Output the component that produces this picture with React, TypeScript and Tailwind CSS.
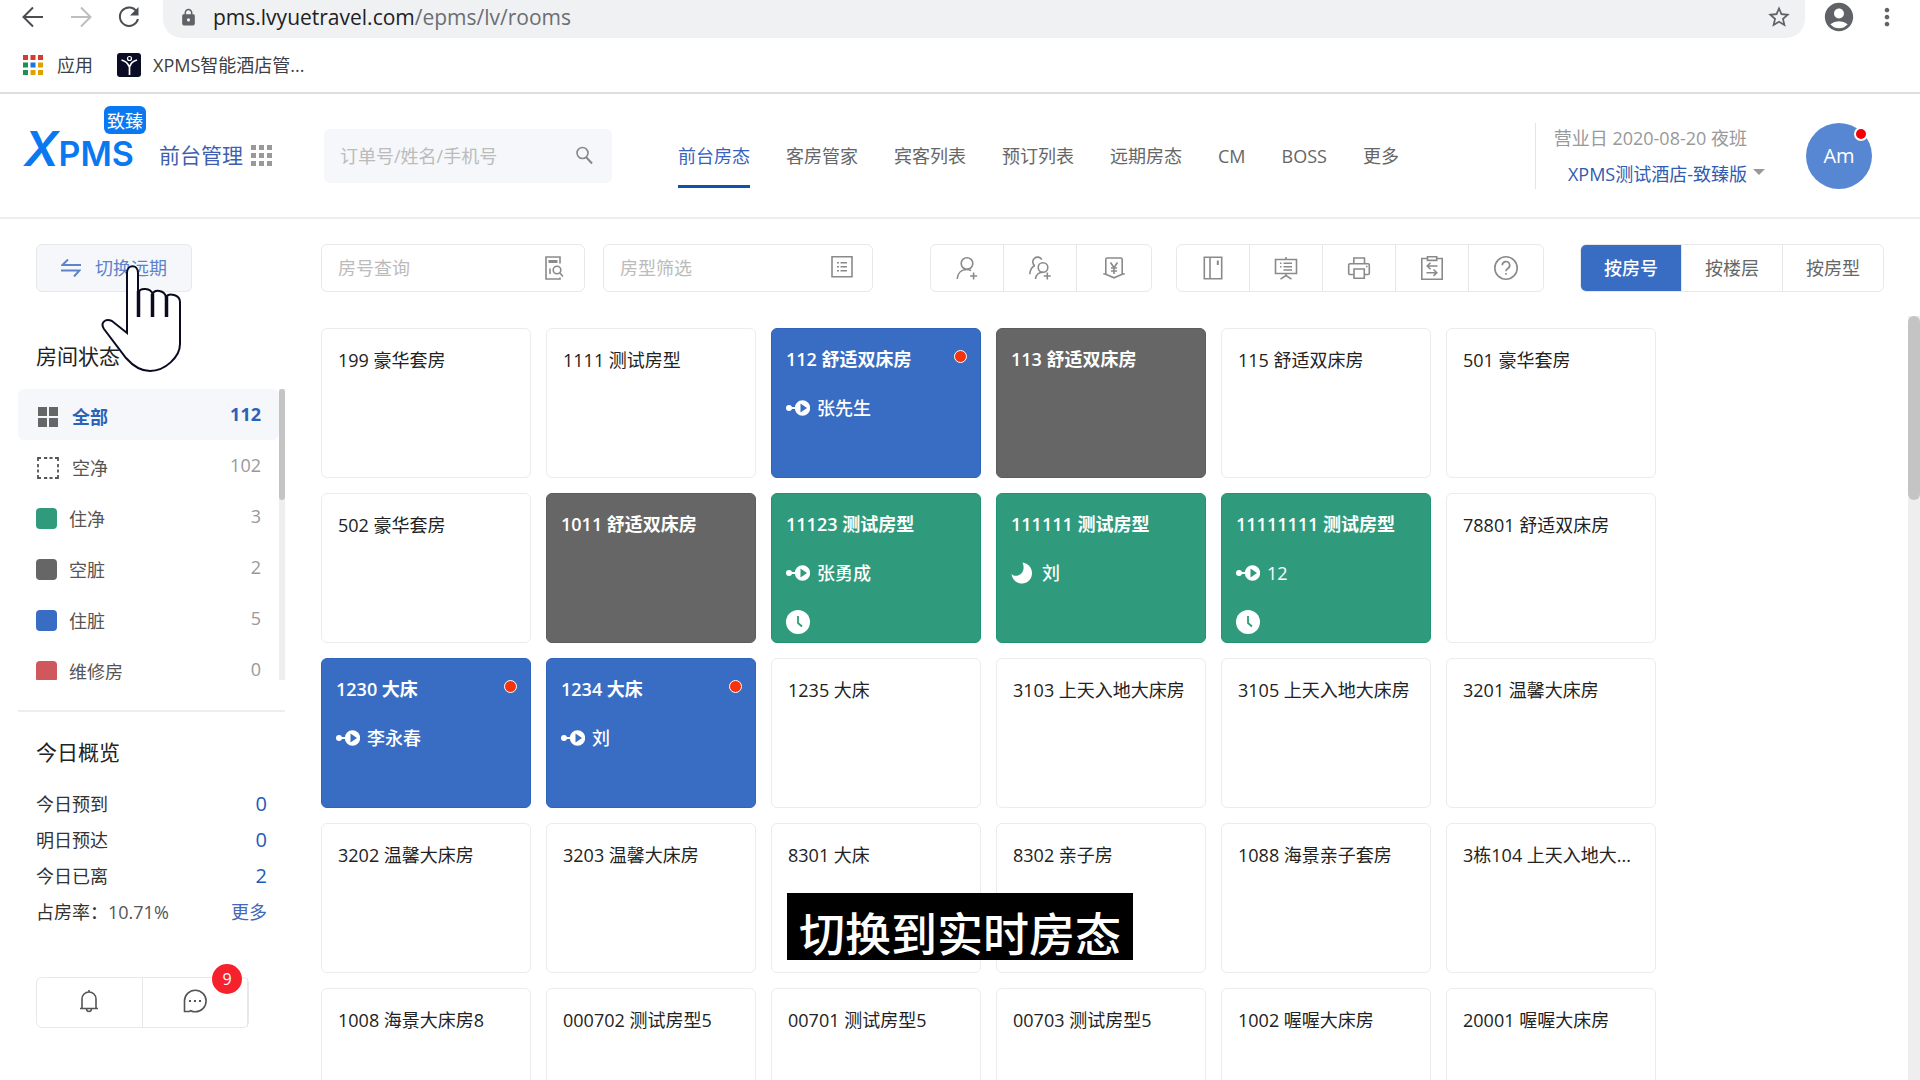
import { useState } from 'react';
import type { ReactNode } from 'react';
import clsx from 'clsx';
import { MdAccountCircle, MdLock, MdMoreVert, MdStarBorder } from 'react-icons/md';

type RoomStatus = 'free' | 'dirty' | 'occupied' | 'occupiedDirty';

interface Room {
  no: string;
  type: string;
  status?: RoomStatus;
  guest?: string;
  guestIcon?: 'key' | 'moon';
  alert?: boolean;
  clock?: boolean;
}

const ROOMS: Room[] = [
  { no: '199', type: '豪华套房' },
  { no: '1111', type: '测试房型' },
  { no: '112', type: '舒适双床房', status: 'occupiedDirty', guest: '张先生', alert: true },
  { no: '113', type: '舒适双床房', status: 'dirty' },
  { no: '115', type: '舒适双床房' },
  { no: '501', type: '豪华套房' },
  { no: '502', type: '豪华套房' },
  { no: '1011', type: '舒适双床房', status: 'dirty' },
  { no: '11123', type: '测试房型', status: 'occupied', guest: '张勇成', clock: true },
  { no: '111111', type: '测试房型', status: 'occupied', guest: '刘', guestIcon: 'moon' },
  { no: '11111111', type: '测试房型', status: 'occupied', guest: '12', clock: true },
  { no: '78801', type: '舒适双床房' },
  { no: '1230', type: '大床', status: 'occupiedDirty', guest: '李永春', alert: true },
  { no: '1234', type: '大床', status: 'occupiedDirty', guest: '刘', alert: true },
  { no: '1235', type: '大床' },
  { no: '3103', type: '上天入地大床房' },
  { no: '3105', type: '上天入地大床房' },
  { no: '3201', type: '温馨大床房' },
  { no: '3202', type: '温馨大床房' },
  { no: '3203', type: '温馨大床房' },
  { no: '8301', type: '大床' },
  { no: '8302', type: '亲子房' },
  { no: '1088', type: '海景亲子套房' },
  { no: '3栋104', type: '上天入地大...' },
  { no: '1008', type: '海景大床房8' },
  { no: '000702', type: '测试房型5' },
  { no: '00701', type: '测试房型5' },
  { no: '00703', type: '测试房型5' },
  { no: '1002', type: '喔喔大床房' },
  { no: '20001', type: '喔喔大床房' },
];

const CARD_STYLES: Record<RoomStatus, string> = {
  free: 'border-[#ececec] bg-white px-4 pt-[19px] text-[#222]',
  dirty: 'border-[#5c5c5c] bg-[#666] px-[14px] pt-[18px] font-semibold text-white',
  occupied: 'border-[#1f9373] bg-[#309b7c] px-[14px] pt-[18px] font-semibold text-white',
  occupiedDirty: 'border-[#2f64bd] bg-[#396dc4] px-[14px] pt-[18px] font-semibold text-white',
};

const NAV = ['前台房态', '客房管家', '宾客列表', '预订列表', '远期房态', 'CM', 'BOSS', '更多'];

const STATUSES = [
  { label: '住净', count: 3, box: 'bg-[#309b7c]' },
  { label: '空脏', count: 2, box: 'bg-[#666]' },
  { label: '住脏', count: 5, box: 'bg-[#396dc4]' },
  { label: '维修房', count: 0, box: 'bg-[#d0585c]' },
];

const OVERVIEW = [
  { label: '今日预到', value: 0 },
  { label: '明日预达', value: 0 },
  { label: '今日已离', value: 2 },
];

function LineIcon({ children, className }: { children: ReactNode; className?: string }) {
  return (
    <svg
      viewBox="0 0 24 24"
      className={clsx('size-6 shrink-0', className)}
      fill="none"
      stroke="currentColor"
      strokeWidth="1.6"
      aria-hidden="true"
    >
      {children}
    </svg>
  );
}

const GUEST_TOOLS = [
  {
    label: '新增客人',
    icon: (
      <>
        <circle cx="12" cy="7.5" r="5.8" />
        <path d="M2.2 23c.3-5.500 3.800-9.500 9.800-9.500 1.800 0 3 .4 4 1.200M18.600 16.500v7M15.100 20h7" />
      </>
    ),
  },
  {
    label: '新增团队',
    icon: (
      <>
        <path d="M13.800 3.600A4.800 4.800 0 1 0 6.800 9.800M1.800 18.300c.3-4.200 2-7.300 5-8.500" />
        <circle cx="15" cy="11.500" r="4.800" />
        <path d="M7.500 23c.5-4.500 2.700-6.800 7.500-6.800M19.300 16.500v7M15.800 20h7" />
      </>
    ),
  },
  {
    label: '收款',
    icon: (
      <>
        <path d="M3.800 18V3.500a1.500 1.500 0 0 1 1.500-1.500h13.400a1.500 1.500 0 0 1 1.500 1.500V18" />
        <path d="M1.300 17.800l2.500.4L12 21.800l8.200-3.600 2.500-.4" />
        <path d="M8.500 6.500l3.500 5 3.500-5M12 11.500V18M9 12h6M9 15h6" />
      </>
    ),
  },
];

const PAGE_TOOLS = [
  {
    label: '房间',
    icon: (
      <>
        <path d="M3.300 1.300h17.400v21.400H3.300zM9 1.300v21.400" />
        <path d="M16.800 4.500v4.500" strokeWidth="2" />
      </>
    ),
  },
  {
    label: '看板',
    icon: (
      <>
        <path d="M1.500 3.500h21v14h-21zM12 1v2.500M12 17.500V20M6.500 23.200 12 19.500l5.500 3.700" />
        <path d="M6 7.300h1.500M9.500 7.300H18M6 10.700h1.500M9.500 10.700H18M9.500 14H18" />
      </>
    ),
  },
  {
    label: '打印',
    icon: (
      <>
        <path d="M6.800 7.800V2h10.700v5.800" />
        <path d="M6.800 18.500H3a1.300 1.300 0 0 1-1.300-1.300V9.100A1.300 1.300 0 0 1 3 7.800h18a1.300 1.300 0 0 1 1.300 1.300v8.100a1.300 1.300 0 0 1-1.300 1.300h-3.500" />
        <path d="M7 13h10.300v9.300H7zM19 10.500h1.500" />
      </>
    ),
  },
  {
    label: '交班',
    icon: (
      <>
        <path d="M7 2.500H1.800v20.700h20.400V2.500H17" />
        <path d="M7.500.8h9.200v3.600H7.500zM17.500 10H7.500M10.500 6.800 7.200 10l3.300 3.200M6.500 16.700h10M13.500 13.500l3.300 3.200-3.300 3.200" />
      </>
    ),
  },
  {
    label: '帮助',
    icon: (
      <>
        <circle cx="12" cy="12" r="11.200" />
        <path d="M8.300 9.300a3.700 3.700 0 1 1 5.500 3.200c-1.200.7-1.800 1.300-1.800 2.800M12 17v1.800" />
      </>
    ),
  },
];

function ToolGroup({ tools }: { tools: { label: string; icon: ReactNode }[] }) {
  return (
    <div className="flex h-12 divide-x divide-[#e8e8e8] rounded-md border border-[#e8e8e8]">
      {tools.map((t) => (
        <button
          key={t.label}
          type="button"
          aria-label={t.label}
          className="flex w-[73px] items-center justify-center text-[#8a8a8a] last:w-[74px]"
        >
          <LineIcon>{t.icon}</LineIcon>
        </button>
      ))}
    </div>
  );
}

function GuestKeyIcon() {
  return (
    <svg viewBox="0 0 24 16" className="h-4 w-6" aria-hidden="true">
      <circle cx="3" cy="8" r="3" fill="currentColor" />
      <path d="M3 8h8" stroke="currentColor" strokeWidth="2" />
      <path
        fill="currentColor"
        fillRule="evenodd"
        d="M16.500.3a7.700 7.700 0 1 1 0 15.400 7.700 7.700 0 0 1 0-15.400zm-2 3.200v9l6.500-4.500z"
      />
    </svg>
  );
}

function MoonIcon() {
  return (
    <svg viewBox="0 0 24 24" className="size-6" aria-hidden="true">
      <path
        fill="currentColor"
        d="M11.500 1.500c5.500.8 9.500 5 9.500 10.500 0 6-4.400 10.500-10 10.500-5.500 0-9.500-3.500-10.600-9.500 2 2 4.800 2.300 7.200 1.300 4.800-1.800 6.300-7.300 3.900-12.800z"
      />
    </svg>
  );
}

function ClockIcon() {
  return (
    <svg viewBox="0 0 24 24" className="size-6" aria-hidden="true">
      <circle cx="12" cy="12" r="12" fill="currentColor" />
      <path d="M12 6v7l4 3.500" fill="none" stroke="#309b7c" strokeWidth="1.800" />
    </svg>
  );
}

function RoomCard({ room }: { room: Room }) {
  const status = room.status ?? 'free';
  return (
    <article
      className={clsx(
        'relative flex h-[150px] flex-col gap-[25px] rounded-md border leading-6',
        CARD_STYLES[status],
      )}
    >
      <h3 className="whitespace-nowrap">
        {room.no} {room.type}
      </h3>
      {room.guest && (
        <p className="flex h-6 items-center gap-[7px] font-medium">
          {room.guestIcon === 'moon' ? <MoonIcon /> : <GuestKeyIcon />}
          {room.guest}
        </p>
      )}
      {room.clock && <ClockIcon />}
      {room.alert && (
        <span className="absolute top-[21px] right-[13px] size-[13px] rounded-full border border-white bg-[#f5330c]" />
      )}
    </article>
  );
}

function BrowserBar() {
  return (
    <div className="shrink-0 border-b-2 border-[#dedede] bg-white">
      <div className="flex h-[38px] items-start pr-[19px] text-[#5f6368]">
        <div className="flex h-[34px] w-[163px] items-center gap-6 pl-[21px]">
          <LineIcon className="text-[#4a4d51]">
            <path d="M22 12H3M12 2.500 2.500 12l9.500 9.500" strokeWidth="2" />
          </LineIcon>
          <LineIcon className="text-[#bcbec0]">
            <path d="M2 12h19M12 2.500 21.500 12 12 21.500" strokeWidth="2" />
          </LineIcon>
          <LineIcon className="text-[#4a4d51]">
            <path d="M19.500 6.200A9.200 9.200 0 1 0 21 14" strokeWidth="2" />
            <path d="M21.500 2v8.500H13z" fill="currentColor" stroke="none" />
          </LineIcon>
        </div>
        <div className="flex h-[38px] flex-1 items-center rounded-b-[19px] bg-[#f0f1f3] pr-[13px] pb-1 pl-4">
          <MdLock className="size-[19px]" />
          <p className="ml-[15px] text-[21px] leading-7 text-[#6b6e72]">
            <span className="text-[#202124]">pms.lvyuetravel.com</span>/epms/lv/rooms
          </p>
          <MdStarBorder className="ml-auto size-[26px]" />
        </div>
        <div className="flex h-[34px] items-center">
          <MdAccountCircle className="ml-[17px] size-[34px]" />
          <MdMoreVert className="ml-[17px] size-[28px]" />
        </div>
      </div>
      <div className="flex h-[54px] items-center pl-[23px] text-lg text-[#3c4043]">
        <svg viewBox="0 0 20 20" className="size-5" aria-hidden="true">
          <path d="M0 0h5v5H0zM7.500 0h5v5h-5zM15 0h5v5h-5z" fill="#d93a2b" />
          <path d="M0 7.500h5v5H0zM0 15h5v5H0z" fill="#1a9350" />
          <path d="M7.500 7.500h5v5h-5z" fill="#1a73e8" />
          <path d="M15 7.500h5v5h-5zM7.500 15h5v5h-5zM15 15h5v5h-5z" fill="#dfa100" />
        </svg>
        <a href="#apps" className="ml-[14px]">
          应用
        </a>
        <svg viewBox="0 0 24 24" className="ml-6 size-6" aria-hidden="true">
          <rect width="24" height="24" rx="3" fill="#0b0d26" />
          <circle cx="12.500" cy="5.500" r="2" fill="none" stroke="#fff" strokeWidth="1.200" />
          <path d="M4.500 7c3.500 1 6.500 3 7.500 6.500M20 7c-3.500 1-6.500 3-7 6.500M12.500 12v10" fill="none" stroke="#fff" strokeWidth="1.700" />
        </svg>
        <a href="#xpms" className="ml-3">
          XPMS智能酒店管...
        </a>
      </div>
    </div>
  );
}

function Header() {
  return (
    <header className="flex h-[125px] shrink-0 items-center border-b-2 border-[#eee] bg-white">
      <div className="flex w-[324px] items-center pl-6 text-[#3f5fae]">
        <div className="relative mb-2 flex w-[135px] items-baseline font-[Inter] leading-[50px] font-semibold text-[#0a78f0]">
          <span className="text-5xl leading-[50px] italic">X</span>
          <span className="text-[34px] leading-[50px]">PMS</span>
          <span className="absolute -top-[18px] left-20 flex h-7 w-[42px] items-center justify-center rounded-md bg-[#0a78f0] font-['Noto_Sans_CJK_SC'] text-lg font-normal text-white">
            致臻
          </span>
        </div>
        <span className="text-[21px]">前台管理</span>
        <button type="button" aria-label="切换系统" className="ml-2">
          <svg viewBox="0 0 21 21" className="size-[21px]" fill="#999" aria-hidden="true">
            <path d="M0 0h5v5H0zM8 0h5v5H8zM16 0h5v5h-5zM0 8h5v5H0zM8 8h5v5H8zM16 8h5v5h-5zM0 16h5v5H0zM8 16h5v5H8zM16 16h5v5h-5z" />
          </svg>
        </button>
      </div>

      <label className="flex h-[54px] w-[288px] items-center rounded-md bg-[#f5f7fa] px-4">
        <input
          type="text"
          aria-label="搜索订单"
          placeholder="订单号/姓名/手机号"
          className="min-w-0 flex-1 outline-none placeholder:text-[#bbb]"
        />
        <LineIcon className="text-[#888]">
          <circle cx="10.500" cy="9" r="5.500" />
          <path d="M14 13l6 6.500" strokeWidth="2" />
        </LineIcon>
      </label>

      <nav className="ml-[66px] flex gap-9 text-[#666]">
        {NAV.map((item, i) => (
          <a
            key={item}
            href={`#nav-${i}`}
            className={clsx(
              'flex h-16 items-center border-b-3 pt-[3px]',
              i === 0 ? 'border-[#0f52ad] text-[#3763c0]' : 'border-transparent',
            )}
          >
            {item}
          </a>
        ))}
      </nav>

      <div className="ml-auto flex h-[66px] items-center border-l border-[#e4e4e4] pr-12">
        <div className="w-[211px] text-right leading-9">
          <p className="text-[#999]">营业日 2020-08-20 夜班</p>
          <button type="button" className="text-[#2f5bb0]">
            XPMS测试酒店-致臻版
          </button>
        </div>
        <span className="mt-8 ml-[6px] border-x-6 border-t-6 border-x-transparent border-t-[#999]" />
        <div className="relative ml-[41px] flex size-[66px] items-center justify-center rounded-full bg-[#5787d3] text-xl text-white">
          Am
          <span className="absolute top-1 right-1 size-[14px] rounded-full border-2 border-white bg-[#f40000]" />
        </div>
      </div>
    </header>
  );
}

function PointerHand() {
  return (
    <svg
      viewBox="0 0 84 110"
      className="pointer-events-none absolute top-5 left-[82px] z-10 h-[110px] w-[84px]"
      fill="#fff"
      stroke="#0b0b20"
      strokeWidth="2"
      aria-hidden="true"
    >
      <path d="M27 69V9c0-9 11-9 11 0v20c2-6 13-5 14.500 1 2-5 12-4 13.500 3 3-5 14-2 14 5v42c0 13-15 27-30 27-9 0-17-5-24-13L4 65c-4-6 1-11 8-8z" />
      <path d="M38.500 27v26M52.500 30v23M66.500 32v21" strokeWidth="3.500" />
    </svg>
  );
}

function Sidebar() {
  return (
    <aside className="w-[285px] shrink-0 pt-[25px] pl-[18px] text-[#555]">
      <div className="relative pl-[18px]">
        <button
          type="button"
          className="flex h-12 w-[156px] items-center justify-center gap-[14px] rounded-md border border-[#e6e8ec] bg-[#f5f7fb] text-[#5c83cc]"
        >
          <svg viewBox="0 0 20 18" className="h-[18px] w-5" fill="none" stroke="currentColor" strokeWidth="2" aria-hidden="true">
            <path d="M20 6H1.500L7 .5M0 11.500h18.500L13 17.500" />
          </svg>
          切换远期
        </button>
        <PointerHand />
      </div>

      <h2 className="mt-[46px] pl-[18px] text-[21px] leading-9 text-[#222]">房间状态</h2>

      <div className="mt-[15px] flex h-[291px] overflow-hidden">
        <ul className="flex-1">
          <li className="flex h-[51px] items-center rounded-md bg-[#f5f7fb] pr-[18px] pl-5 font-bold text-[#2a62b8]">
            <svg viewBox="0 0 20 20" className="mt-1 mr-[14px] size-5" fill="#666" aria-hidden="true">
              <path d="M0 0h9v9H0zM11 0h9v9h-9zM0 11h9v9H0zM11 11h9v9h-9z" />
            </svg>
            <span className="flex-1 pt-1">全部</span>
            <span className="pb-[2px]">112</span>
          </li>
          <li className="flex h-[51px] items-center pr-[18px] pl-[19px]">
            <svg viewBox="0 0 22 22" className="mt-1 mr-[13px] size-[22px]" fill="none" stroke="#555" strokeWidth="1.800" aria-hidden="true">
              <path d="M1 4V1h3M7 1h3.200M12.500 1h3M18 1h3v3M21 7v3.200M21 12.500v3M21 18v3h-3M15.500 21h-3M10.200 21H7M4 21H1v-3M1 15.500v-3M1 10.200V7" />
            </svg>
            <span className="flex-1 pt-1">空净</span>
            <span className="pb-[2px] text-[#999]">102</span>
          </li>
          {STATUSES.map((s) => (
            <li key={s.label} className="flex h-[51px] items-center pr-[18px] pl-[18px]">
              <span className={clsx('mt-1 size-[21px] shrink-0 rounded-sm', s.box)} />
              <span className="ml-3 flex-1 pt-1">{s.label}</span>
              <span className="pb-[2px] text-[#999]">{s.count}</span>
            </li>
          ))}
        </ul>
        <div className="w-[6px] bg-[#eee]">
          <div className="h-[111px] rounded-full bg-[#c4c4c4]" />
        </div>
      </div>

      <section className="mt-[30px] border-t-2 border-[#eee] pt-[22px] pl-[18px]">
        <h2 className="text-[21px] leading-9 text-[#222]">今日概览</h2>
        <dl className="mt-4 pr-[18px] leading-9 text-[#333]">
          {OVERVIEW.map((row) => (
            <div key={row.label} className="flex justify-between">
              <dt>{row.label}</dt>
              <dd className="text-xl leading-9 text-[#1f5bb5]">{row.value}</dd>
            </div>
          ))}
          <div className="flex">
            <dt>占房率：</dt>
            <dd className="flex-1 text-[#555]">10.71%</dd>
            <dd>
              <a href="#more" className="text-[#4468b8]">
                更多
              </a>
            </dd>
          </div>
        </dl>

        <div className="relative mt-[47px] flex h-[51px] w-[213px] divide-x divide-[#e8e8e8] rounded-md border border-[#e8e8e8] text-[#555]">
          <button type="button" aria-label="通知" className="flex flex-1 items-center justify-center pb-1">
            <LineIcon>
              <path d="M5 19.500V10a7 7 0 0 1 14 0v9.500M3 19.500h18M12 1v2M9.500 20c.2 1.600 1.200 2.500 2.500 2.500s2.300-.9 2.500-2.500" />
            </LineIcon>
          </button>
          <button type="button" aria-label="消息" className="flex flex-1 items-center justify-center pb-1">
            <LineIcon>
              <path d="M1.500 22.500V12A10.800 10.800 0 1 1 12.300 22.800c-1.800 0-3.200-.4-4.500-1.100l-1.500.8z" />
              <path d="M6 12h2M11 12h2M16 12h2" strokeWidth="2" />
            </LineIcon>
          </button>
          <span className="absolute -top-[14px] right-[6px] flex size-[30px] items-center justify-center rounded-full bg-[#f5222d] text-base text-white">
            9
          </span>
        </div>
      </section>
    </aside>
  );
}

function Toolbar() {
  const [sortBy, setSortBy] = useState('按房号');
  return (
    <div className="flex pr-6 text-[#666]">
      <label className="flex h-12 w-[264px] items-center rounded-md border border-[#e8e8e8] pr-[18px] pl-4">
        <input
          type="text"
          aria-label="房号查询"
          placeholder="房号查询"
          className="min-w-0 flex-1 outline-none placeholder:text-[#bbb]"
        />
        <LineIcon className="text-[#8a8a8a]">
          <path d="M18 7.500V1H4v22h14v-1.500M8 12.500V18" />
          <path d="M6.500 5.500h9" strokeWidth="3" />
          <circle cx="15" cy="14" r="3.800" />
          <path d="M17.800 17l3.200 3.500" />
        </LineIcon>
      </label>
      <label className="ml-[18px] flex h-12 w-[270px] items-center rounded-md border border-[#e8e8e8] pr-[18px] pl-4">
        <input
          type="text"
          aria-label="房型筛选"
          placeholder="房型筛选"
          className="min-w-0 flex-1 outline-none placeholder:text-[#bbb]"
        />
        <LineIcon className="text-[#8a8a8a]">
          <path d="M2 .8h20v20H2z" />
          <path d="M7 6.800h2M10.500 6.800H17M7 10.800h2M10.500 10.800H17M7 14.800h2M10.500 14.800H17" />
        </LineIcon>
      </label>
      <div className="ml-[57px] flex gap-6">
        <ToolGroup tools={GUEST_TOOLS} />
        <ToolGroup tools={PAGE_TOOLS} />
      </div>
      <div className="ml-auto flex h-12 overflow-hidden rounded-md border border-[#e8e8e8]">
        {['按房号', '按楼层', '按房型'].map((label) => (
          <button
            key={label}
            type="button"
            aria-pressed={sortBy === label}
            onClick={() => setSortBy(label)}
            className={clsx(
              'border-r border-[#e8e8e8] px-[23px] last:border-r-0',
              sortBy === label && 'bg-[#396dc4] font-medium text-white',
            )}
          >
            {label}
          </button>
        ))}
      </div>
    </div>
  );
}

export default function App() {
  return (
    <div className="relative flex h-screen flex-col overflow-hidden bg-white font-['Open_Sans','Noto_Sans_CJK_SC',sans-serif] text-lg">
      <BrowserBar />
      <Header />
      <div className="flex min-h-0 flex-1">
        <Sidebar />
        <main className="flex min-w-0 flex-1 flex-col pt-[25px] pl-9">
          <div className="pr-3">
            <Toolbar />
          </div>
          <div className="mt-6 flex min-h-0 flex-1">
            <div className="mt-3 grid flex-1 grid-cols-[repeat(auto-fill,210px)] content-start gap-[15px] overflow-hidden pr-12">
              {ROOMS.map((room) => (
                <RoomCard key={room.no} room={room} />
              ))}
            </div>
            <div className="w-3 bg-[#eee]">
              <div className="h-[184px] rounded-full bg-[#c4c4c4]" />
            </div>
          </div>
        </main>
      </div>

      <p className="absolute bottom-[120px] left-1/2 -translate-x-1/2 bg-black px-3 pt-[15px] pb-[2px] text-[46px] leading-[50px] font-medium whitespace-nowrap text-white">
        切换到实时房态
      </p>
    </div>
  );
}
